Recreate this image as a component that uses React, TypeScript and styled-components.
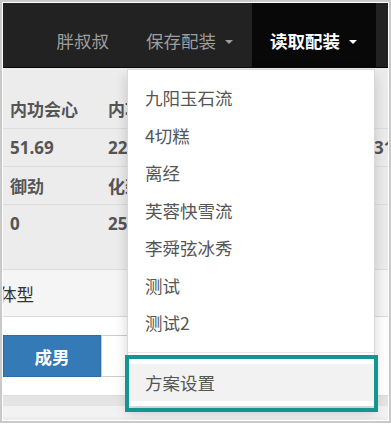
import React from "react";
import styled, { createGlobalStyle } from "styled-components";

const GlobalStyle = createGlobalStyle`
  html, body {
    margin: 0;
    padding: 0;
    background: #ffffff;
  }
  body {
    font-family: "Noto Sans CJK SC", "Open Sans", sans-serif;
  }
`;

const Frame = styled.div`
  width: 391px;
  height: 423px;
  box-sizing: border-box;
  border: 2px solid #c9c9c9;
  padding: 1px;
  background: #fff;
`;

const Screen = styled.div`
  position: relative;
  height: 100%;
  overflow: hidden;
  display: flex;
  flex-direction: column;
  background: #ececec;
`;

const Navbar = styled.div`
  height: 65px;
  box-sizing: border-box;
  flex-shrink: 0;
  display: flex;
  justify-content: flex-end;
  background: #222;
  border-bottom: 1px solid #080808;
  padding-right: 12px;
`;

const NavItem = styled.div<{ $active?: boolean }>`
  display: flex;
  align-items: flex-start;
  padding: 27px 19px 0 18px;
  font-size: 17.5px;
  line-height: 22px;
  color: ${(p) => (p.$active ? "#fff" : "#9d9d9d")};
  background: ${(p) => (p.$active ? "#080808" : "transparent")};
  font-weight: ${(p) => (p.$active ? 700 : 400)};
`;

const Caret = styled.span<{ $active?: boolean }>`
  display: inline-block;
  width: 0;
  height: 0;
  margin: 10px 0 0 9px;
  border-top: 4px solid ${(p) => (p.$active ? "#fff" : "#9d9d9d")};
  border-left: 4px solid transparent;
  border-right: 4px solid transparent;
`;

const Content = styled.div`
  flex: 1;
  display: flex;
  flex-direction: column;
  padding-top: 21px;
`;

const Table = styled.div`
  display: grid;
  grid-template-columns: 98px 98px 84px 84px 1fr;
`;

const Cell = styled.div<{ $first?: boolean }>`
  height: ${(p) => (p.$first ? "39px" : "38px")};
  box-sizing: border-box;
  border-top: ${(p) => (p.$first ? "none" : "1px solid #dcdcdc")};
  padding: 0 0 0 7px;
  display: flex;
  align-items: center;
  font-size: 17px;
  font-weight: 700;
  color: #555;
  white-space: nowrap;
  overflow: hidden;
  font-family: "Open Sans", "Noto Sans CJK SC", sans-serif;
`;

const Spacer = styled.div<{ $h: number; $bg: string }>`
  height: ${(p) => p.$h}px;
  background: ${(p) => p.$bg};
  flex-shrink: 0;
`;

const Panel = styled.div`
  border-top: 1px solid #dcdcdc;
  border-bottom: 1px solid #dcdcdc;
  background: #fff;
`;

const PanelHeading = styled.div`
  height: 47px;
  box-sizing: border-box;
  background: #f5f5f5;
  border-bottom: 1px solid #dcdcdc;
  display: flex;
  align-items: center;
  padding-left: 0;
  overflow: hidden;
  font-size: 17.5px;
  color: #333;
`;

const HeadingText = styled.span`
  margin-left: -4px;
`;

const PanelBody = styled.div`
  display: flex;
  padding: 18px 0;
`;

const Button = styled.div<{ $primary?: boolean }>`
  width: 98px;
  height: 42px;
  box-sizing: border-box;
  display: flex;
  align-items: center;
  justify-content: center;
  font-size: 17.5px;
  font-weight: 700;
  color: ${(p) => (p.$primary ? "#fff" : "#333")};
  background: ${(p) => (p.$primary ? "#337ab7" : "#fff")};
  border: 1px solid ${(p) => (p.$primary ? "#2e6da4" : "#ccc")};
`;

const Menu = styled.div`
  position: absolute;
  left: 124px;
  top: 66px;
  width: 248px;
  box-sizing: border-box;
  background: #fff;
  border: 1px solid rgba(0, 0, 0, 0.15);
  box-shadow: 0 6px 12px rgba(0, 0, 0, 0.175);
  padding: 9px 0 5px;
`;

const MenuItem = styled.div<{ $hover?: boolean }>`
  position: relative;
  height: 37.5px;
  display: flex;
  align-items: center;
  padding-left: 17px;
  font-size: 17.5px;
  color: #555;
  background: ${(p) => (p.$hover ? "#f2f2f2" : "transparent")};
`;

const Highlight = styled.div`
  position: absolute;
  top: -9px;
  left: -3px;
  right: -4px;
  bottom: -11px;
  border: 4px solid #13968f;
  pointer-events: none;
`;

const Divider = styled.div`
  height: 1px;
  margin: 10px 0 11px;
  background: #e5e5e5;
`;

const rows = [
  ["内功会心", "内功破防", "", "", ""],
  ["51.69", "2230", "", "", "31"],
  ["御劲", "化劲", "", "", ""],
  ["0", "2500", "", "", ""],
];

const presets = ["九阳玉石流", "4切糕", "离经", "芙蓉快雪流", "李舜弦冰秀", "测试", "测试2"];

export default function App() {
  return (
    <>
      <GlobalStyle />
      <Frame>
        <Screen>
          <Navbar>
            <NavItem>胖叔叔</NavItem>
            <NavItem>
              保存配装
              <Caret />
            </NavItem>
            <NavItem $active>
              读取配装
              <Caret $active />
            </NavItem>
          </Navbar>
          <Content>
            <Table>
              {rows.map((row, r) =>
                row.map((text, c) => (
                  <Cell key={`${r}-${c}`} $first={r === 0}>
                    {text}
                  </Cell>
                ))
              )}
            </Table>
            <Spacer $h={27} $bg="transparent" />
            <Panel>
              <PanelHeading>
                <HeadingText>体型</HeadingText>
              </PanelHeading>
              <PanelBody>
                <Button $primary>成男</Button>
                <Button>成女</Button>
              </PanelBody>
            </Panel>
            <Spacer $h={10} $bg="#e4e4e4" />
            <Spacer $h={11} $bg="#f2f2f2" />
          </Content>
          <Menu>
            {presets.map((name) => (
              <MenuItem key={name}>{name}</MenuItem>
            ))}
            <Divider />
            <MenuItem $hover>
              方案设置
              <Highlight />
            </MenuItem>
          </Menu>
        </Screen>
      </Frame>
    </>
  );
}
